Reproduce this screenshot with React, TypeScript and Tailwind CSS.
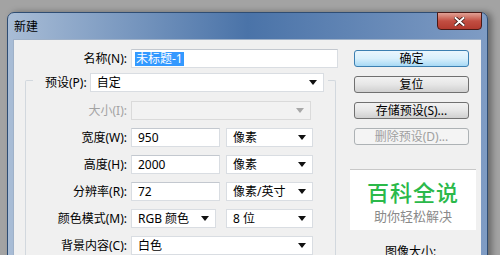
import React from "react";

const font = "font-['Noto_Sans','Noto_Sans_CJK_SC',sans-serif]";

const Arrow = ({ disabled }: { disabled?: boolean }) => (
  <svg width="8" height="5" viewBox="0 0 8 5" className="shrink-0">
    <path d="M0 0 H8 L4 5 Z" fill={disabled ? "#a8a8a8" : "#111"} />
  </svg>
);

const Select = ({
  value,
  width,
  disabled,
}: {
  value?: string;
  width: string;
  disabled?: boolean;
}) => (
  <div
    className={`${width} h-[19px] flex items-center justify-between pl-[6px] pr-[6px] border ${
      disabled ? "bg-[#f2f2f2] border-[#dadada]" : "bg-white border-[#d9dde2]"
    }`}
  >
    <span className="text-[12px] leading-none text-black">{value}</span>
    <Arrow disabled={disabled} />
  </div>
);

const Input = ({ value, width }: { value: string; width: string }) => (
  <div
    className={`${width} h-[19px] flex items-center pl-[6px] bg-white border border-[#d9dde2] border-t-[#c3c8cf]`}
  >
    <span className="text-[12px] leading-none text-black">{value}</span>
  </div>
);

const Row = ({
  label,
  disabled,
  children,
}: {
  label: string;
  disabled?: boolean;
  children: React.ReactNode;
}) => (
  <div className="flex items-center h-[19px]">
    <div
      className={`w-[101px] text-right text-[12px] leading-none ${
        disabled ? "text-[#a3a3a3]" : "text-black"
      }`}
    >
      {label}
    </div>
    <div className="ml-[4px] flex items-center gap-[6px]">{children}</div>
  </div>
);

const Button = ({
  label,
  primary,
  disabled,
}: {
  label: string;
  primary?: boolean;
  disabled?: boolean;
}) => (
  <div
    className={`w-[115px] h-[17px] rounded-[3px] border flex items-center justify-center text-[12px] leading-none ${
      primary
        ? "border-[#3c7fb1] bg-gradient-to-b from-[#eaf6fd] via-[#d9f0fc] to-[#a7d9f5] text-black"
        : disabled
        ? "border-[#adb2b5] bg-[#f4f4f4] text-[#a0a0a0]"
        : "border-[#707070] bg-gradient-to-b from-[#f2f2f2] via-[#e6e6e6] to-[#d0d0d0] text-black"
    }`}
  >
    {label}
  </div>
);

export default function App() {
  return (
    <div
      className={`w-[500px] h-[255px] overflow-hidden bg-[#a3a3a3] pt-[12px] pl-[7px] ${font}`}
    >
      <div className="relative w-[481px] h-[260px] rounded-t-[7px] border border-[#2f4d73] bg-gradient-to-r from-[#a9bdd6] via-[#4a73a8] to-[#7f9cc4] shadow-[4px_0_6px_rgba(0,0,0,0.35)]">
        {/* title bar */}
        <div className="h-[26px] flex items-center pl-[6px]">
          <span className="text-[12px] text-black leading-none mt-[1px]">新建</span>
        </div>
        <div className="absolute top-[-1px] right-[5px] w-[45px] h-[18px] rounded-b-[4px] border border-[#4a1a16] bg-gradient-to-b from-[#e0a195] via-[#c24e42] to-[#b23a2f] flex items-center justify-center">
          <svg width="11" height="9" viewBox="0 0 11 9">
            <path d="M1.5 1 L9.5 8 M9.5 1 L1.5 8" stroke="#3a1410" strokeWidth="3.6" strokeLinecap="square" />
            <path d="M1.5 1 L9.5 8 M9.5 1 L1.5 8" stroke="#ffffff" strokeWidth="2" strokeLinecap="square" />
          </svg>
        </div>

        {/* client area */}
        <div className="ml-[5px] mr-[6px] h-[230px] bg-[#f0f0f0] border-l border-t border-[#9fb1c8] flex">
          {/* left column */}
          <div className="w-[336px] flex flex-col">
            <div className="mt-[9px] flex items-center h-[19px]">
              <div className="w-[113px] text-right text-[12px] leading-none text-black">名称(N):</div>
              <div className="ml-[4px] w-[207px] h-[19px] flex items-center pl-[3px] bg-white border border-[#d9dde2] border-t-[#c3c8cf]">
                <span className="bg-[#3399ff] text-white text-[12px] leading-[14px] px-[1px]">未标题-1</span>
              </div>
            </div>

            {/* preset group */}
            <div className="ml-[11px] mt-[12px] w-[311px] flex-1 border-l border-t border-r border-[#d2d8de] rounded-t-[2px] flex flex-col">
              <div className="-mt-[8px] ml-[7px] w-[295px] h-[19px] bg-[#f0f0f0] flex items-center">
                <span className="ml-[12px] text-[12px] leading-none text-black">预设(P):</span>
                <div className="ml-[3px]">
                  <Select value="自定" width="w-[234px]" />
                </div>
              </div>

              <div className="mt-[9px] flex flex-col gap-[8px]">
                <Row label="大小(I):" disabled>
                  <Select width="w-[180px]" disabled />
                </Row>
                <Row label="宽度(W):">
                  <Input value="950" width="w-[89px]" />
                  <Select value="像素" width="w-[87px]" />
                </Row>
                <Row label="高度(H):">
                  <Input value="2000" width="w-[89px]" />
                  <Select value="像素" width="w-[87px]" />
                </Row>
                <Row label="分辨率(R):">
                  <Input value="72" width="w-[89px]" />
                  <Select value="像素/英寸" width="w-[87px]" />
                </Row>
                <Row label="颜色模式(M):">
                  <Select value="RGB 颜色" width="w-[85px]" />
                  <div className="ml-[4px]">
                    <Select value="8 位" width="w-[87px]" />
                  </div>
                </Row>
                <Row label="背景内容(C):">
                  <Select value="白色" width="w-[182px]" />
                </Row>
              </div>
            </div>
          </div>

          {/* right column */}
          <div className="w-[126px] flex flex-col">
            <div className="ml-[4px] mt-[10px] flex flex-col gap-[9px]">
              <Button label="确定" primary />
              <Button label="复位" />
              <Button label="存储预设(S)..." />
              <Button label="删除预设(D)..." disabled />
            </div>
            <div className="mt-[24px] h-[61px] bg-white border-t border-[#c8c8c8] flex flex-col items-center pt-[7px]">
              <span className="text-[22px] leading-[30px] text-[#2bb94a] font-medium tracking-[1px]">百科全说</span>
              <span className="text-[13px] leading-[18px] text-[#8a8a8a]">助你轻松解决</span>
            </div>
            <div className="mt-[15px] pl-[35px] text-[12px] leading-[14px] text-black">图像大小:</div>
          </div>
        </div>
      </div>
    </div>
  );
}
